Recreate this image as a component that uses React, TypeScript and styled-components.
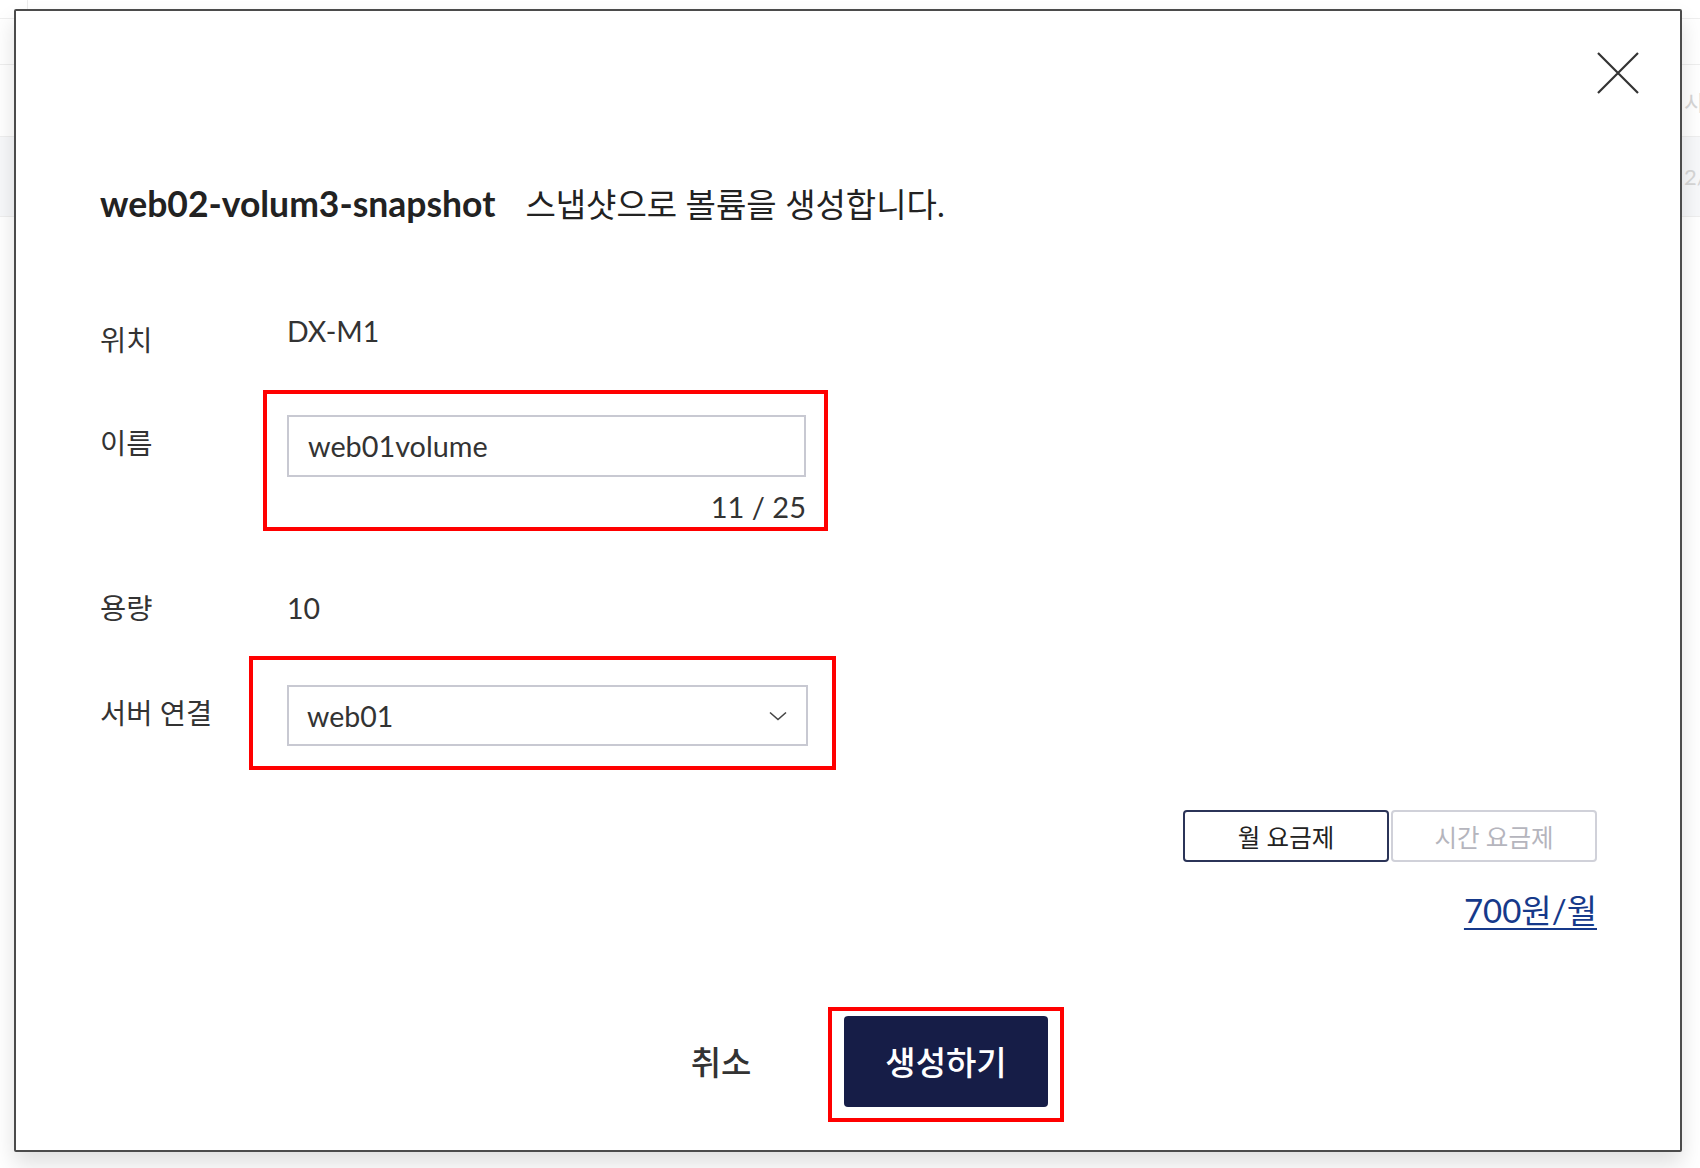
import React from 'react';
import styled, { createGlobalStyle } from 'styled-components';

const GlobalStyle = createGlobalStyle`
    * {
        box-sizing: border-box;
    }

    body {
        margin: 0;
        background-color: #fff;
        font-family: 'Lato', 'Noto Sans CJK KR', sans-serif;
        color: #222;
    }
`;

const Page = styled.div`
    position: relative;
    width: 1700px;
    height: 1168px;
    overflow: hidden;
    background-color: #fff;
`;

const BackTop = styled.div`
    height: 18px;
    width: 28px;
    border-right: 1px solid #ececec;
`;

const BackRow = styled('div')<{ $height: number; $tint?: boolean }>`
    display: grid;
    grid-template-columns: 1684px 1fr;
    align-items: center;
    height: ${props => props.$height}px;
    border-top: 1px solid #eeeeee;
    background-color: ${props => props.$tint ? '#f7f8fa' : '#fff'};
    font-size: 22px;
    color: #d6d6d6;
    white-space: nowrap;
    overflow: hidden;
`;

const Modal = styled.div`
    position: absolute;
    left: 14px;
    top: 9px;
    width: 1668px;
    height: 1143px;
    display: flex;
    flex-direction: column;
    padding: 172px 83px 27px 84px;
    background-color: #fff;
    border: 2px solid #4b4b4b;
    border-radius: 2px;
    box-shadow: 0 12px 22px rgba(0, 0, 0, 0.13);
`;

const CloseButton = styled.button`
    position: absolute;
    top: 41px;
    right: 41px;
    width: 42px;
    height: 42px;
    padding: 0;
    border: none;
    background: none;
    cursor: pointer;
`;

const Title = styled.h2`
    margin: 0;
    display: flex;
    align-items: center;
    height: 40px;
    font-size: 33px;
    font-weight: 400;
    color: #222;
`;

const TitleName = styled.span`
    font-size: 35.5px;
    font-weight: 700;
    margin-right: 30px;
`;

const Form = styled.div`
    display: flex;
    flex-direction: column;
    margin-top: 88px;
`;

const Row = styled('div')<{ $gap: number }>`
    display: grid;
    grid-template-columns: 187px 1fr;
    align-items: start;
    margin-top: ${props => props.$gap}px;
`;

const Label = styled('div')<{ $offset: number }>`
    padding-top: ${props => props.$offset}px;
    font-size: 28.5px;
    line-height: 40px;
    color: #333;
`;

const Value = styled('div')<{ $offset?: number }>`
    padding-top: ${props => props.$offset || 0}px;
    font-size: 28.5px;
    line-height: 40px;
    color: #333;
`;

const Highlight = styled('div')<{ $shift: number; $pad: string }>`
    align-self: start;
    justify-self: start;
    margin-left: -${props => props.$shift}px;
    padding: ${props => props.$pad};
    border: 4px solid #ff0000;
`;

const NameInput = styled.input`
    display: block;
    width: 519px;
    height: 62px;
    padding: 0 19px;
    border: 2px solid #c8c9d2;
    border-radius: 0;
    font-family: 'Lato', 'Noto Sans CJK KR', sans-serif;
    font-size: 28.8px;
    color: #333;
    outline: none;
`;

const Counter = styled.div`
    margin-top: 13px;
    text-align: right;
    font-size: 29px;
    line-height: 34px;
    color: #333;
`;

const SelectBox = styled.div`
    display: flex;
    align-items: center;
    justify-content: space-between;
    width: 521px;
    height: 61px;
    padding: 0 19px 0 18px;
    border: 2px solid #c8c9d2;
    font-size: 28.5px;
    color: #333;
`;

const Pricing = styled.div`
    display: flex;
    flex-direction: column;
    align-items: flex-end;
    margin-top: 40px;
`;

const Toggle = styled.div`
    display: flex;
    gap: 2px;
`;

const Segment = styled('button')<{ $active: boolean }>`
    width: 206px;
    height: 52px;
    padding: 0;
    background-color: #fff;
    border: 2px solid ${props => props.$active ? '#2b3458' : '#d0d1d9'};
    border-radius: 4px;
    font-family: 'Lato', 'Noto Sans CJK KR', sans-serif;
    font-size: 24.5px;
    color: ${props => props.$active ? '#222' : '#b5b5bd'};
    cursor: pointer;
`;

const Price = styled.a`
    margin-top: 28px;
    font-size: 33px;
    line-height: 40px;
    color: #16398a;
    text-decoration: underline;
    text-decoration-thickness: 2px;
    text-underline-offset: 5px;
`;

const Footer = styled.div`
    display: flex;
    justify-content: center;
    align-items: center;
    gap: 5px;
    margin-top: 77px;
    padding-right: 14px;
`;

const CancelButton = styled.button`
    width: 204px;
    height: 91px;
    padding: 0 0 8px;
    border: none;
    background: none;
    font-family: 'Lato', 'Noto Sans CJK KR', sans-serif;
    font-size: 33px;
    font-weight: 500;
    color: #333;
    cursor: pointer;
`;

const CreateButton = styled.button`
    display: block;
    width: 204px;
    height: 91px;
    padding: 0 0 2px;
    border: none;
    border-radius: 4px;
    background-color: #161d47;
    font-family: 'Lato', 'Noto Sans CJK KR', sans-serif;
    font-size: 33px;
    font-weight: 500;
    color: #fff;
    cursor: pointer;
`;

const App: React.FC = () => {
    return (
        <Page>
            <GlobalStyle />
            <BackTop />
            <BackRow $height={46} />
            <BackRow $height={72}><span />시간</BackRow>
            <BackRow $height={80} $tint><span />2/2</BackRow>
            <BackRow $height={40} />

            <Modal>
                <CloseButton aria-label='close'>
                    <svg width='42' height='42' viewBox='0 0 42 42'>
                        <path d='M1 1 L41 41 M41 1 L1 41' stroke='#333' strokeWidth='2.2' fill='none' />
                    </svg>
                </CloseButton>

                <Title>
                    <TitleName>web02-volum3-snapshot</TitleName>
                    스냅샷으로 볼륨을 생성합니다.
                </Title>

                <Form>
                    <Row $gap={0}>
                        <Label $offset={9}>위치</Label>
                        <Value>DX-M1</Value>
                    </Row>
                    <Row $gap={30}>
                        <Label $offset={33}>이름</Label>
                        <Highlight $shift={24} $pad='21px 18px 3px 20px'>
                            <NameInput defaultValue='web01volume' maxLength={25} />
                            <Counter>11 / 25</Counter>
                        </Highlight>
                    </Row>
                    <Row $gap={56}>
                        <Label $offset={1}>용량</Label>
                        <Value $offset={1}>10</Value>
                    </Row>
                    <Row $gap={28}>
                        <Label $offset={37}>서버 연결</Label>
                        <Highlight $shift={38} $pad='25px 24px 20px 34px'>
                            <SelectBox>
                                web01
                                <svg width='18' height='10' viewBox='0 0 18 10'>
                                    <path d='M1 1.5 L9 8.5 L17 1.5' stroke='#444' strokeWidth='1.6' fill='none' />
                                </svg>
                            </SelectBox>
                        </Highlight>
                    </Row>
                </Form>

                <Pricing>
                    <Toggle>
                        <Segment $active={true}>월 요금제</Segment>
                        <Segment $active={false}>시간 요금제</Segment>
                    </Toggle>
                    <Price>700원/월</Price>
                </Pricing>

                <Footer>
                    <CancelButton>취소</CancelButton>
                    <Highlight $shift={0} $pad='5px 12px 11px 12px'>
                        <CreateButton>생성하기</CreateButton>
                    </Highlight>
                </Footer>
            </Modal>
        </Page>
    );
};

export default App
